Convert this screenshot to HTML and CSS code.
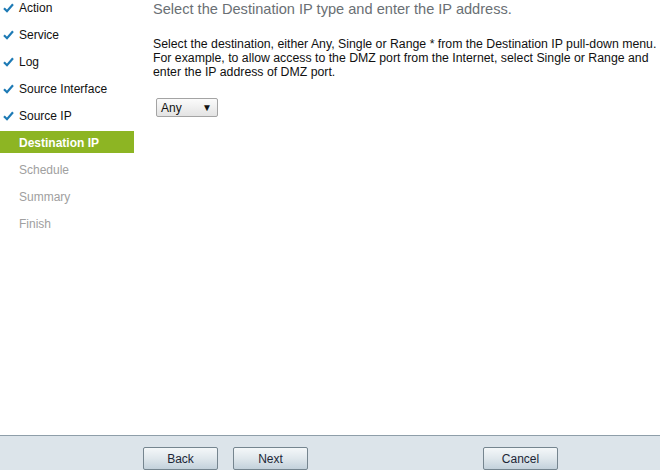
FILE: index.html
```html
<!DOCTYPE html>
<html>
	<head>
		<title>Access Rule Setup Wizard</title>
		<meta charset="UTF-8">
		<link rel="stylesheet" href="styles.css">
	</head>
	<body>
		<div class="pagina">
			<div class="corp">
				<ul class="pasi">
					<li class="pas gata"><span class="bifa"><svg width="11" height="10" viewBox="0 0 11 10"><path d="M1 5.2 L4 8.2 L10 1.2" fill="none" stroke="#1d7ab5" stroke-width="2.2"/></svg></span>Action</li>
					<li class="pas gata"><span class="bifa"><svg width="11" height="10" viewBox="0 0 11 10"><path d="M1 5.2 L4 8.2 L10 1.2" fill="none" stroke="#1d7ab5" stroke-width="2.2"/></svg></span>Service</li>
					<li class="pas gata"><span class="bifa"><svg width="11" height="10" viewBox="0 0 11 10"><path d="M1 5.2 L4 8.2 L10 1.2" fill="none" stroke="#1d7ab5" stroke-width="2.2"/></svg></span>Log</li>
					<li class="pas gata"><span class="bifa"><svg width="11" height="10" viewBox="0 0 11 10"><path d="M1 5.2 L4 8.2 L10 1.2" fill="none" stroke="#1d7ab5" stroke-width="2.2"/></svg></span>Source Interface</li>
					<li class="pas gata"><span class="bifa"><svg width="11" height="10" viewBox="0 0 11 10"><path d="M1 5.2 L4 8.2 L10 1.2" fill="none" stroke="#1d7ab5" stroke-width="2.2"/></svg></span>Source IP</li>
					<li class="pas curent"><span class="bifa"></span>Destination IP</li>
					<li class="pas viitor"><span class="bifa"></span>Schedule</li>
					<li class="pas viitor"><span class="bifa"></span>Summary</li>
					<li class="pas viitor"><span class="bifa"></span>Finish</li>
				</ul>
				<div class="continut">
					<h1 class="titlu">Select the Destination IP type and enter the IP address.</h1>
					<p class="explicatie">Select the destination, either Any, Single or Range * from the Destination IP pull-down menu. For example, to allow access to the DMZ port from the Internet, select Single or Range and enter the IP address of DMZ port.</p>
					<div class="alegere">
						<span>Any</span>
						<span class="sageata">&#9660;</span>
					</div>
				</div>
			</div>
			<div class="subsol">
				<button type="button" class="buton">Back</button>
				<button type="button" class="buton">Next</button>
				<button type="button" class="buton anuleaza">Cancel</button>
			</div>
		</div>
	</body>
</html>
```
FILE: styles.css
```css
body, html {
	margin: 0;
	height: 100%;
}
body {
	font-family: "Liberation Sans", Arial, sans-serif;
	font-size: 12px;
	color: #111;
	overflow: hidden;
}
.pagina {
	display: flex;
	flex-direction: column;
	height: 470px;
}
.corp {
	flex: 1;
	display: flex;
}
.pasi {
	list-style: none;
	margin: -4px 0 0 0;
	padding: 0;
	width: 134px;
	flex: none;
}
.pas {
	display: flex;
	align-items: center;
	height: 22px;
	padding-top: 1px;
	box-sizing: border-box;
	margin-bottom: 5px;
	font-size: 12px;
}
.bifa {
	width: 19px;
	flex: none;
	display: flex;
	padding-left: 3px;
	box-sizing: border-box;
}
.curent {
	background-color: #8db523;
	color: #fff;
	font-weight: bold;
}
.viitor {
	color: #a0a0a0;
}
.continut {
	flex: 1;
	padding-left: 19px;
}
.titlu {
	margin: 0;
	font-size: 14.6px;
	font-weight: normal;
	line-height: 18px;
	color: #6a6f74;
}
.explicatie {
	margin: 19px 0 19px 0;
	font-size: 12.3px;
	line-height: 14px;
	color: #111;
}
.alegere {
	display: flex;
	align-items: center;
	justify-content: space-between;
	width: 62px;
	height: 19px;
	box-sizing: border-box;
	margin-left: 3px;
	padding: 0 5px 0 4px;
	border: 1px solid #a4a4a4;
	border-radius: 2px;
	background: linear-gradient(#fbfbfb, #e3e3e3);
	color: #111;
}
.sageata {
	font-size: 10px;
}
.subsol {
	height: 35px;
	box-sizing: border-box;
	border-top: 1px solid #8e9ea9;
	background-color: #dce4ea;
	display: flex;
	align-items: flex-start;
	padding: 11px 0 0 143px;
	gap: 15px;
}
.buton {
	width: 75px;
	height: 23px;
	border: 1px solid #75858f;
	border-radius: 2px;
	background: linear-gradient(#f4f7f9, #dfe7ec 50%, #c3d1db);
	font-family: "Liberation Sans", Arial, sans-serif;
	font-size: 12px;
	color: #1c2636;
	padding: 0;
}
.anuleaza {
	margin-left: 160px;
}
```
